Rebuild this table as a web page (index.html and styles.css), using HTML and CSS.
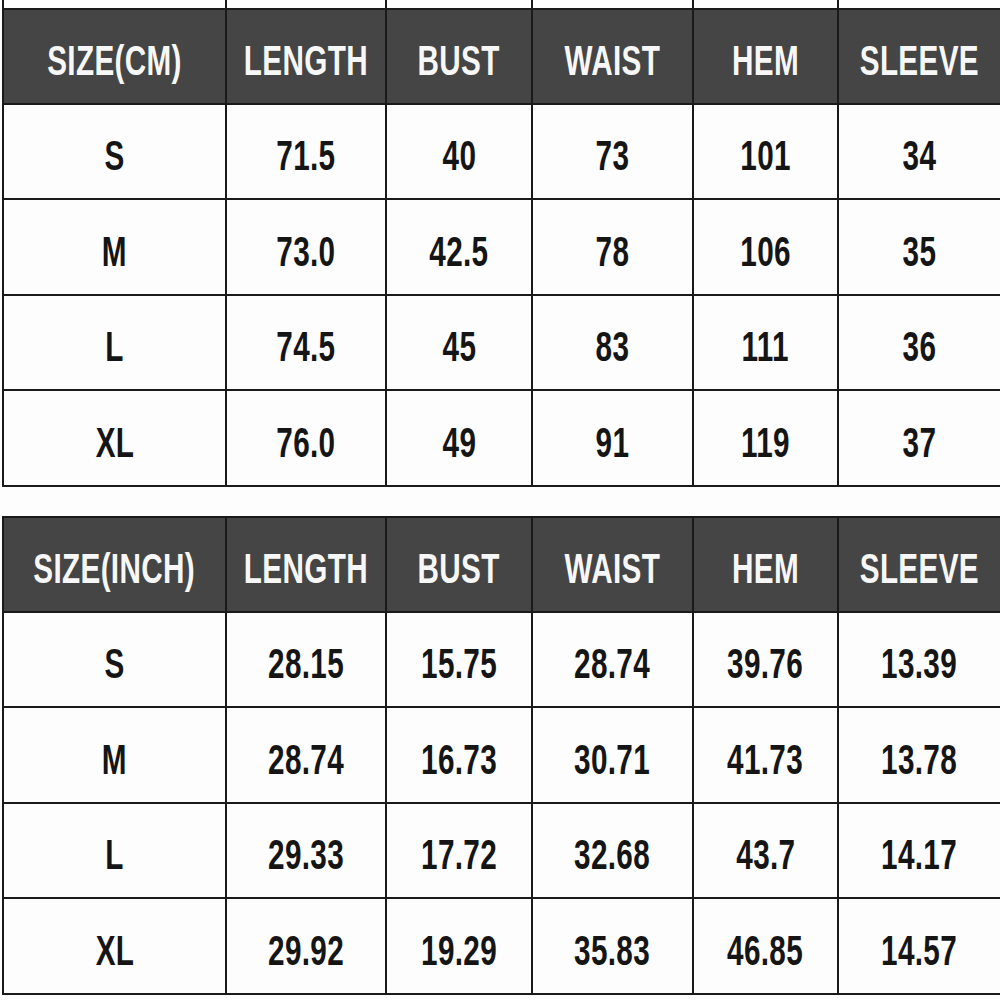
FILE: index.html
```html
<!DOCTYPE html>
<html>
<head>
<meta charset="utf-8">
<link rel="stylesheet" href="styles.css">
</head>
<body>
<div class="page">
  <div class="stub">
    <div class="c"></div><div class="c"></div><div class="c"></div><div class="c"></div><div class="c"></div><div class="c last"></div>
  </div>
  <div class="chart">
    <div class="row head">
      <div class="c"><span>SIZE(CM)</span></div><div class="c"><span>LENGTH</span></div><div class="c"><span>BUST</span></div><div class="c"><span>WAIST</span></div><div class="c"><span>HEM</span></div><div class="c last"><span>SLEEVE</span></div>
    </div>
    <div class="row b">
      <div class="c"><span>S</span></div><div class="c"><span>71.5</span></div><div class="c"><span>40</span></div><div class="c"><span>73</span></div><div class="c"><span>101</span></div><div class="c last"><span>34</span></div>
    </div>
    <div class="row a">
      <div class="c"><span>M</span></div><div class="c"><span>73.0</span></div><div class="c"><span>42.5</span></div><div class="c"><span>78</span></div><div class="c"><span>106</span></div><div class="c last"><span>35</span></div>
    </div>
    <div class="row b">
      <div class="c"><span>L</span></div><div class="c"><span>74.5</span></div><div class="c"><span>45</span></div><div class="c"><span>83</span></div><div class="c"><span>111</span></div><div class="c last"><span>36</span></div>
    </div>
    <div class="row a">
      <div class="c"><span>XL</span></div><div class="c"><span>76.0</span></div><div class="c"><span>49</span></div><div class="c"><span>91</span></div><div class="c"><span>119</span></div><div class="c last"><span>37</span></div>
    </div>
  </div>
  <div class="chart second">
    <div class="row head">
      <div class="c"><span>SIZE(INCH)</span></div><div class="c"><span>LENGTH</span></div><div class="c"><span>BUST</span></div><div class="c"><span>WAIST</span></div><div class="c"><span>HEM</span></div><div class="c last"><span>SLEEVE</span></div>
    </div>
    <div class="row b">
      <div class="c"><span>S</span></div><div class="c"><span>28.15</span></div><div class="c"><span>15.75</span></div><div class="c"><span>28.74</span></div><div class="c"><span>39.76</span></div><div class="c last"><span>13.39</span></div>
    </div>
    <div class="row a">
      <div class="c"><span>M</span></div><div class="c"><span>28.74</span></div><div class="c"><span>16.73</span></div><div class="c"><span>30.71</span></div><div class="c"><span>41.73</span></div><div class="c last"><span>13.78</span></div>
    </div>
    <div class="row b">
      <div class="c"><span>L</span></div><div class="c"><span>29.33</span></div><div class="c"><span>17.72</span></div><div class="c"><span>32.68</span></div><div class="c"><span>43.7</span></div><div class="c last"><span>14.17</span></div>
    </div>
    <div class="row a">
      <div class="c"><span>XL</span></div><div class="c"><span>29.92</span></div><div class="c"><span>19.29</span></div><div class="c"><span>35.83</span></div><div class="c"><span>46.85</span></div><div class="c last"><span>14.57</span></div>
    </div>
  </div>
</div>
</body>
</html>
```

FILE: styles.css
```css
html, body {
  margin: 0;
  padding: 0;
  background: #fdfdfd;
}
.page {
  width: 1000px;
  height: 1000px;
  overflow: hidden;
  padding-left: 2px;
  box-sizing: border-box;
  font-family: "Liberation Sans", "DejaVu Sans Condensed", sans-serif;
  font-weight: bold;
}
.stub, .row {
  display: grid;
  grid-template-columns: 223px 160px 146px 161px 145px 161px;
}
.stub {
  height: 8px;
  border-left: 2px solid #1a1a1a;
}
.stub .c {
  border-right: 2px solid #1a1a1a;
}
.chart {
  border-top: 2px solid #1a1a1a;
  border-left: 2px solid #1a1a1a;
}
.second {
  margin-top: 29px;
}
.row .c {
  border-right: 2px solid #1a1a1a;
  border-bottom: 2px solid #1a1a1a;
  display: flex;
  align-items: center;
  justify-content: center;
  padding-top: 8px;
  box-sizing: border-box;
}
.c.last {
  border-right: none;
}
.row.a { height: 96px; }
.row.b { height: 95px; }
.row.head { height: 95px; }
.head .c {
  background: #454545;
}
.row .c span {
  display: inline-block;
  font-size: 43px;
  line-height: 1;
  letter-spacing: 0.5px;
  transform: scaleX(0.69);
  color: #151515;
}
.head .c span {
  color: #f7f7f7;
}
```
